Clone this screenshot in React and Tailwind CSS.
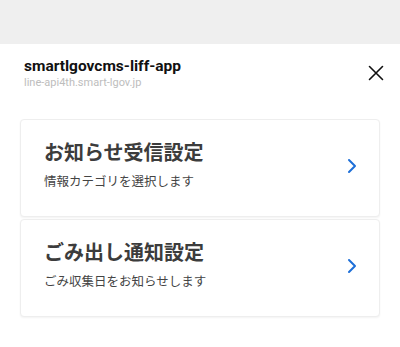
/**
 * LIFF app menu: gray status strip, app header with close button, two setting cards.
 */

function Chevron() {
  return (
    <svg width="10" height="16" viewBox="0 0 10 16" fill="none" aria-hidden>
      <path d="M2 2l6 6-6 6" stroke="#1d6fd8" strokeWidth="2" strokeLinecap="round" strokeLinejoin="round" />
    </svg>
  );
}

function CloseIcon() {
  return (
    <svg width="16" height="16" viewBox="0 0 16 16" fill="none" aria-hidden>
      <path d="M1.5 1.5l13 13M14.5 1.5l-13 13" stroke="#111" strokeWidth="1.6" strokeLinecap="round" />
    </svg>
  );
}

function MenuCard({ title, description }) {
  return (
    <button
      type="button"
      className="w-full h-[98px] flex items-start justify-between bg-white border border-[#eeeeee] rounded-[4px] shadow-[0_1px_2px_rgba(0,0,0,0.05)] pl-[23px] pr-[22px] pt-[19px] text-left"
    >
      <div>
        <p className="text-[20px] leading-7 font-bold text-[#3c3c3c]">{title}</p>
        <p className="mt-[6px] text-[12.5px] leading-[18px] text-[#444]">{description}</p>
      </div>
      <span className="mt-[19px]">
        <Chevron />
      </span>
    </button>
  );
}

export default function App() {
  return (
    <div
      className="min-h-screen bg-white flex flex-col"
      style={{ fontFamily: 'Roboto, "Noto Sans CJK JP", sans-serif' }}
    >
      {/* top strip */}
      <div className="h-[44px] bg-[#efefef]" />

      {/* header */}
      <header className="flex items-start justify-between pl-6 pr-4 pt-[13px]">
        <div>
          <h1 className="text-[15.5px] leading-[18px] font-bold text-[#111]">smartlgovcms-liff-app</h1>
          <p className="mt-[1px] text-[11px] leading-[14px] text-[#bdbdbd]">line-api4th.smart-lgov.jp</p>
        </div>
        <span className="mt-[8px]">
          <CloseIcon />
        </span>
      </header>

      {/* cards */}
      <main className="px-5 pt-[29px] flex flex-col gap-[2px]">
        <MenuCard title="お知らせ受信設定" description="情報カテゴリを選択します" />
        <MenuCard title="ごみ出し通知設定" description="ごみ収集日をお知らせします" />
      </main>
    </div>
  );
}
